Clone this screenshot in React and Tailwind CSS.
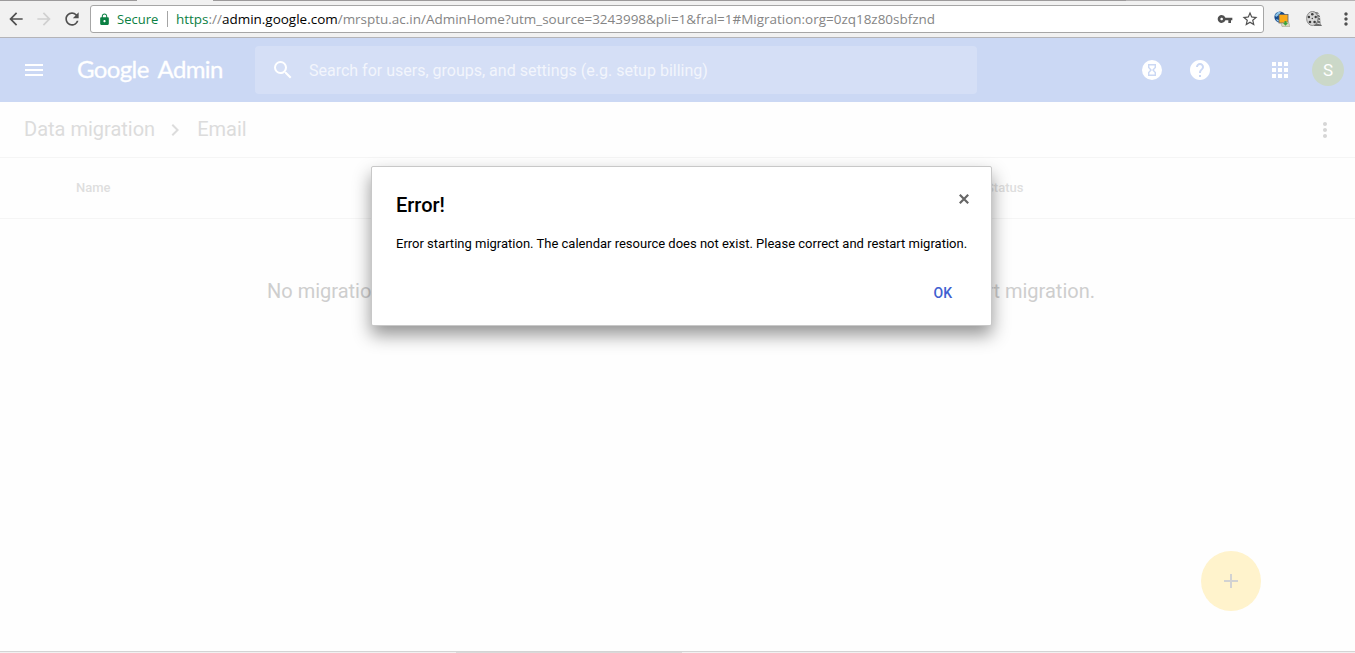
import React, { useState } from 'react';
import {
  MdApps,
  MdArrowBack,
  MdArrowForward,
  MdChevronRight,
  MdHelp,
  MdLock,
  MdMenu,
  MdMoreVert,
  MdRefresh,
  MdSearch,
  MdStarBorder,
  MdVpnKey,
} from 'react-icons/md';

const GlobeIcon = () => (
  <svg className="w-4 h-4" viewBox="0 0 16 16">
    <circle cx="6" cy="6" r="5.6" fill="#174a8c" />
    <path d="M1 4l3-3 3 0-2 3-3 2zM2 8l3 1 1 2-3-1z" fill="#8cc4e8" />
    <rect x="5" y="3.5" width="9" height="8.5" fill="#fba919" stroke="#5b6470" strokeWidth="0.8" />
    <path d="M7 12.5l7.5-1.5 1.5 4.5H8z" fill="#d9d6bd" stroke="#9a9a85" strokeWidth="0.5" />
    <path d="M10.5 10h2v2h1.5l-2.5 2.7-2.5-2.7h1.5z" fill="#3aa535" />
  </svg>
);

const ReelIcon = () => (
  <svg className="w-4 h-4" viewBox="0 0 16 16">
    <path d="M7 .5l5 1 2 4 .5 7L16 15H8z" fill="#6a6a6a" />
    <path d="M11 3l3 1M12 6l2.5 1M12 9l2.5 1M11 12l3.5 1" stroke="#e0e0e0" strokeWidth="1" />
    <ellipse cx="6.3" cy="7.5" rx="5.7" ry="7" fill="#d6d6d6" stroke="#777" strokeWidth="0.8" />
    <g fill="#3c3c3c">
      <circle cx="6.3" cy="3.2" r="1.3" />
      <circle cx="2.9" cy="6" r="1.2" />
      <circle cx="9.7" cy="6" r="1.2" />
      <circle cx="4" cy="11" r="1.3" />
      <circle cx="8.6" cy="11" r="1.3" />
      <circle cx="6.3" cy="7.5" r="0.7" />
    </g>
  </svg>
);

const HourglassIcon = () => (
  <svg className="w-5 h-5" viewBox="0 0 20 20">
    <circle cx="10" cy="10" r="10" fill="#fff" />
    <path
      d="M6.7 4.7h6.6v2.8L11 10l2.3 2.5v2.8H6.7v-2.8L9 10 6.7 7.5z"
      fill="none"
      stroke="#cbd8f4"
      strokeWidth="1.4"
    />
  </svg>
);

const BrowserBar = () => (
  <div className="h-[38px] bg-[#f1f1f1] border-b border-[#b4b4b8]">
    {/* bottom edge of the tab strip */}
    <div className="flex h-px">
      <div className="w-[137px] bg-[#9c9a9b]" />
      <div className="w-[76px] bg-[#f1f1f1]" />
      <div className="w-[913px] bg-[#9c9a9b]" />
      <div className="flex-1 bg-[#b5b3b4]" />
    </div>
    <div className="flex items-center h-9 pl-[6px] text-[#505050]">
      <MdArrowBack size={20} className="shrink-0" />
      <MdArrowForward size={20} className="ml-2 shrink-0 text-[#d0d0d0]" />
      <MdRefresh size={20} className="ml-2 shrink-0" />
      <div className="flex items-center w-[1174px] h-7 ml-2 pl-[7px] pr-[4px] shrink-0 bg-white border border-[#a6a6a6] rounded-[3px] font-['Open_Sans','Noto_Sans',sans-serif] text-[13px] whitespace-nowrap">
        <MdLock size={13} className="text-[#0b8043]" />
        <span className="ml-[6px] pt-px w-[42px] text-[#0b8043]">Secure</span>
        <span className="w-px h-4 ml-[8px] mr-[8px] bg-[#a5a5a5]" />
        <span className="pt-px text-[13.47px] text-[#858585]">
          <span className="text-[#0b8043]">https</span>://
          <span className="text-black">admin.google.com</span>
          /mrsptu.ac.in/AdminHome?utm_source=3243998&amp;pli=1&amp;fral=1#Migration:org=0zq18z80sbfznd
        </span>
        <MdVpnKey size={16} className="ml-auto" />
        <MdStarBorder size={18} className="ml-2" />
      </div>
      <div className="flex items-center ml-[10px] gap-4 shrink-0">
        <GlobeIcon />
        <ReelIcon />
      </div>
      <MdMoreVert size={20} className="ml-[14px] shrink-0" />
    </div>
  </div>
);

const AppHeader = () => (
  <header className="flex items-center h-16 bg-[#cbd8f4] text-white">
    <MdMenu size={24} className="ml-[22px]" />
    <div className="w-[146px] ml-[31px] pb-[2px] font-[Lato,sans-serif] text-[24px] tracking-[-0.6px] [word-spacing:4px] [-webkit-text-stroke:0.3px_white] whitespace-nowrap">
      Google Admin
    </div>
    <div className="flex items-center w-[722px] h-12 ml-8 pl-4 bg-[#d5dff6] rounded">
      <MdSearch size={24} />
      <span className="ml-[14px] pt-[2px] text-base text-[#f2f5fc]">
        Search for users, groups, and settings (e.g. setup billing)
      </span>
    </div>
    <div className="flex items-center ml-auto pr-[11px]">
      <HourglassIcon />
      <MdHelp size={24} className="ml-[26px]" />
      <MdApps size={24} className="ml-14" />
      <div className="flex items-center justify-center w-8 h-8 ml-5 pt-px rounded-full bg-[#cbd8c8] text-[17px]">S</div>
    </div>
  </header>
);

const ErrorDialog = ({ onClose }) => (
  <div className="absolute left-[371px] top-[166px] w-[621px] h-[160px] px-6 bg-white border border-[#c8c8c8] rounded-[2px] shadow-[0_9px_18px_rgba(0,0,0,0.42)] text-black">
    <div className="flex justify-between pt-[23px]">
      <h2 className="text-xl leading-[30px] font-medium">Error!</h2>
      <button onClick={onClose} aria-label="Close" className="flex w-[10px] h-[10px] mt-1 mr-[-2px]">
        <svg className="w-[10px] h-[10px]" viewBox="0 0 10 10">
          <path d="M0.8 0.8l8.4 8.4M9.2 0.8L0.8 9.2" stroke="#666" strokeWidth="2.2" />
        </svg>
      </button>
    </div>
    <p className="mt-[14px] text-[13px] leading-5 whitespace-nowrap">
      Error starting migration. The calendar resource does not exist. Please correct and restart migration.
    </p>
    <div className="flex justify-end mt-[29px] pr-[15px]">
      <button onClick={onClose} className="text-sm leading-5 font-medium text-[#3f5fd0]">
        OK
      </button>
    </div>
  </div>
);

const App = () => {
  const [showError, setShowError] = useState(true);

  return (
    <div className="relative flex flex-col h-[653px] overflow-hidden bg-[#fefefe] font-[Roboto,sans-serif]">
      <BrowserBar />
      <AppHeader />

      {/* Breadcrumbs */}
      <div className="flex items-center h-14 pl-6 pr-[18px] border-b border-[#f5f5f5] text-xl text-[#dcdcdc]">
        <span className="pb-[2px]">Data migration</span>
        <MdChevronRight size={24} className="ml-2 mr-[10px]" />
        <span className="pb-[2px]">Email</span>
        <MdMoreVert size={24} className="ml-auto text-[#d6d6d6]" />
      </div>

      {/* Table head */}
      <div className="flex items-center h-[61px] pl-[76px] border-b border-[#f5f5f5] text-[13px] font-medium text-[#dedede]">
        <span className="w-[910px]">Name</span>
        <span>Status</span>
      </div>

      <div className="flex justify-between mt-[57px] pl-[267px] pr-[260px] text-xl leading-[30px] text-[#cecece]">
        <span>No migration in progress.</span>
        <span>Start migration.</span>
      </div>

      <div className="flex justify-end mt-auto pr-[94px] pb-10">
        <button className="flex items-center justify-center w-[60px] h-[60px] rounded-full bg-[#fff3cc]" aria-label="Add">
          <svg className="w-[14px] h-[14px]" viewBox="0 0 14 14">
            <path d="M7 0v14M0 7h14" stroke="#d2d2d2" strokeWidth="2" />
          </svg>
        </button>
      </div>

      {/* Status bar edge */}
      <div className="h-px bg-[#d4d4d4]" />
      <div className="flex h-px bg-[#f1f1f1]">
        <div className="w-[226px] ml-[456px] bg-[#dadada]" />
      </div>

      {showError && <ErrorDialog onClose={() => setShowError(false)} />}
    </div>
  );
};

export default App;
